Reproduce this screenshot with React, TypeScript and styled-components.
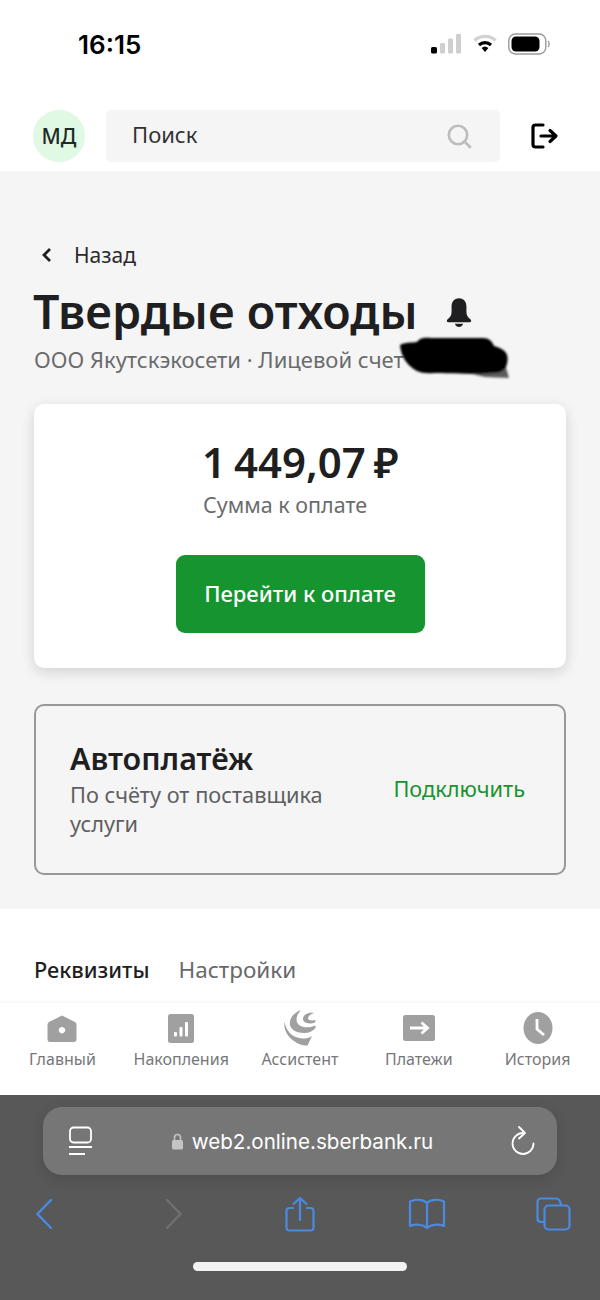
import React from "react";
import styled, { createGlobalStyle } from "styled-components";

const GlobalStyle = createGlobalStyle`
  html, body {
    margin: 0;
    padding: 0;
    background: #fff;
    font-family: "Noto Sans", "Liberation Sans", sans-serif;
  }
`;

const HomeIcon = () => (
  <svg width="30" height="27" viewBox="0 0 30 27">
    <path
      fill="#a0a0a0"
      fillRule="evenodd"
      d="M15 0.5 L28 7 Q29.5 8 29.5 9.5 V24 Q29.5 27 27 27 H3 Q0.5 27 0.5 24 V9.5 Q0.5 8 2 7 Z M15 12 a3.2 3.2 0 1 0 0.01 0 Z"
    />
  </svg>
);

const SavingsIcon = () => (
  <svg width="26" height="29" viewBox="0 0 26 29">
    <rect x="0" y="0" width="26" height="29" rx="2.5" fill="#a0a0a0" />
    <rect x="6" y="18" width="3" height="4.5" rx="1" fill="#fff" />
    <rect x="11.5" y="13" width="3" height="9.5" rx="1" fill="#fff" />
    <rect x="17" y="8" width="3" height="14.5" rx="1" fill="#fff" />
  </svg>
);

const AssistantIcon = () => (
  <svg width="32" height="36" viewBox="0 0 32 36">
    <path
      fill="#a0a0a0"
      d="M17 0 C9 3 5 9 6 15 C7 20 13 23 20 23 C25 23 29 21 31.5 18 L31.5 15.5 C26 18 19 18 15 15 C11 12 12 5 17 0 Z"
    />
    <path
      fill="#a0a0a0"
      d="M30 3 C24 1.5 18.5 5 19 9.5 C19.5 13 25 14.5 31 12.5 L31.5 10 C28 11 24.5 10.5 24 8.5 C23.6 6.5 26.5 4.5 30 3 Z"
    />
    <path
      fill="#a0a0a0"
      d="M0.5 12 C-1 20 5 31 18 35 C20 35.5 22 35.5 23.5 35.5 L28 26 C22 30 14 29 8 25 C4 22 1.5 17 0.5 12 Z"
    />
  </svg>
);

const PaymentsIcon = () => (
  <svg width="32" height="26" viewBox="0 0 32 26">
    <rect x="0" y="0" width="32" height="26" rx="2.5" fill="#a0a0a0" />
    <path d="M7 13 H24 M18.5 7.5 L24.5 13 L18.5 18.5" fill="none" stroke="#fff" strokeWidth="2.8" />
  </svg>
);

const HistoryIcon = () => (
  <svg width="30" height="32" viewBox="0 0 30 32">
    <ellipse cx="15" cy="16" rx="14.5" ry="16" fill="#a0a0a0" />
    <path d="M14 7 V17 L21 23" fill="none" stroke="#fff" strokeWidth="2.8" />
  </svg>
);

const tabs = [
  { label: "Главный", icon: <HomeIcon /> },
  { label: "Накопления", icon: <SavingsIcon /> },
  { label: "Ассистент", icon: <AssistantIcon /> },
  { label: "Платежи", icon: <PaymentsIcon /> },
  { label: "История", icon: <HistoryIcon /> },
];

const App = () => {
  return (
    <Page>
      <GlobalStyle />
      <StatusBar>
        <Clock>16:15</Clock>
        <StatusIcons>
          <svg width="31" height="20" viewBox="0 0 31 20">
            <rect x="0" y="13" width="6" height="6.5" rx="1.5" fill="#000" />
            <rect x="9" y="9" width="5" height="10.5" rx="1.2" fill="#cfcfcf" />
            <rect x="17" y="4.5" width="5" height="15" rx="1.2" fill="#cfcfcf" />
            <rect x="25" y="0" width="5" height="19.5" rx="1.2" fill="#cfcfcf" />
          </svg>
          <svg width="24" height="20" viewBox="0 0 24 20">
            <path d="M1.5 6.5 C7 1 17 1 22.5 6.5" fill="none" stroke="#d2d2d2" strokeWidth="3.4" />
            <path d="M6 11 C9.5 7.8 14.5 7.8 18 11" fill="none" stroke="#000" strokeWidth="3.2" />
            <path d="M8.6 14 C10.8 12 13.2 12 15.4 14 L12 18 Z" fill="#000" />
          </svg>
          <svg width="42" height="22" viewBox="0 0 42 22">
            <rect x="0.8" y="1" width="37" height="20" rx="6.5" fill="none" stroke="#9a9a9a" strokeWidth="1.4" />
            <rect x="3.5" y="3.5" width="28" height="15" rx="4.5" fill="#000" />
            <path d="M40 8 C41.5 9 41.5 13 40 14" fill="none" stroke="#9a9a9a" strokeWidth="1.4" />
          </svg>
        </StatusIcons>
      </StatusBar>

      <Header>
        <Avatar>МД</Avatar>
        <SearchBox>
          <SearchText>Поиск</SearchText>
          <svg width="26" height="26" viewBox="0 0 26 26">
            <circle cx="12" cy="12" r="9.2" fill="none" stroke="#bdbdbd" strokeWidth="2.6" />
            <path d="M18.5 18.5 L24 24" stroke="#bdbdbd" strokeWidth="2.8" strokeLinecap="round" />
          </svg>
        </SearchBox>
        <LogoutButton>
          <svg width="28" height="26" viewBox="0 0 28 26">
            <path
              d="M12 2 H4.5 Q2 2 2 4.5 V21.5 Q2 24 4.5 24 H12"
              fill="none"
              stroke="#000"
              strokeWidth="3.2"
              strokeLinecap="round"
            />
            <path
              d="M10 13 H24.5 M19 7.5 L25 13 L19 18.5"
              fill="none"
              stroke="#000"
              strokeWidth="3.2"
              strokeLinecap="round"
              strokeLinejoin="round"
            />
          </svg>
        </LogoutButton>
      </Header>

      <Content>
        <BackRow>
          <svg width="12" height="16" viewBox="0 0 12 16">
            <path d="M9 2 L3 8 L9 14" fill="none" stroke="#1f1f22" strokeWidth="2.8" />
          </svg>
          <BackText>Назад</BackText>
        </BackRow>
        <TitleRow>
          <Title>Твердые отходы</Title>
          <BellIcon width="26" height="30" viewBox="0 0 28 32">
            <path
              fill="#1f1f22"
              d="M14 0 C19.5 0 22 4 22 9 V15 C22 19 24 21 26.5 23 C27.8 24.2 27 26 25.5 26 H2.5 C1 26 0.2 24.2 1.5 23 C4 21 6 19 6 15 V9 C6 4 8.5 0 14 0 Z"
            />
            <path fill="#1f1f22" d="M9.5 27.5 H18.5 C17.5 30 16 31 14 31 C12 31 10.5 30 9.5 27.5 Z" />
          </BellIcon>
        </TitleRow>
        <SubtitleRow>
          <Subtitle>ООО Якутскэкосети · Лицевой счет</Subtitle>
          <Redaction viewBox="0 0 114 46">
            <defs>
              <filter id="smear" x="-10%" y="-20%" width="120%" height="140%">
                <feGaussianBlur stdDeviation="1.1" />
              </filter>
            </defs>
            <g filter="url(#smear)">
              <path d="M58 34 L108 28 L112 42 L88 41 Z" fill="#333" opacity="0.8" />
              <path
                d="M3 9 C8 6 14 7 20 6 C22 2 28 1 34 2 L86 2 C92 2 95 5 97 10 C104 12 110 15 110.5 21 C111 28 109 34 102 36 C88 38 62 38 44 37 C32 37 26 38 20 35 C12 31 4 22 3 9 Z"
                fill="#050505"
              />
            </g>
          </Redaction>
        </SubtitleRow>

        <PayCard>
          <AmountBlock>
            <Amount>1 449,07 ₽</Amount>
            <AmountLabel>Сумма к оплате</AmountLabel>
          </AmountBlock>
          <PayButton>Перейти к оплате</PayButton>
        </PayCard>

        <AutoCard>
          <AutoText>
            <AutoTitle>Автоплатёж</AutoTitle>
            <AutoDesc>По счёту от поставщика услуги</AutoDesc>
          </AutoText>
          <ConnectLink>Подключить</ConnectLink>
        </AutoCard>
      </Content>

      <TabsSection>
        <TabLabel $active>Реквизиты</TabLabel>
        <TabLabel>Настройки</TabLabel>
      </TabsSection>

      <TabBar>
        {tabs.map((tab) => (
          <TabItem key={tab.label}>
            <TabIcon>{tab.icon}</TabIcon>
            <TabName>{tab.label}</TabName>
          </TabItem>
        ))}
      </TabBar>

      <Browser>
        <UrlBar>
          <svg width="26" height="30" viewBox="0 0 26 30">
            <rect x="2" y="1.5" width="21" height="15" rx="3.5" fill="none" stroke="#fff" strokeWidth="1.8" />
            <path d="M1 21 H24 M1 28 H17" stroke="#fff" strokeWidth="1.8" />
          </svg>
          <UrlCenter>
            <svg width="13" height="17" viewBox="0 0 13 17">
              <path d="M3.5 7 V4.5 a3 3 0 0 1 6 0 V7" fill="none" stroke="#c4c4c4" strokeWidth="1.6" />
              <rect x="1" y="7" width="11" height="9.5" rx="1.5" fill="#c4c4c4" />
            </svg>
            <UrlText>web2.online.sberbank.ru</UrlText>
          </UrlCenter>
          <svg width="26" height="32" viewBox="0 0 26 32">
            <path
              d="M13 8 A10.5 10.5 0 1 0 23.5 18.5"
              fill="none"
              stroke="#fff"
              strokeWidth="1.8"
              strokeLinecap="round"
            />
            <path
              d="M9 2 L15 8 L9 13.5"
              fill="none"
              stroke="#fff"
              strokeWidth="1.8"
              strokeLinecap="round"
              strokeLinejoin="round"
            />
          </svg>
        </UrlBar>
        <BrowserTools>
          <ToolSlot>
            <svg width="18" height="32" viewBox="0 0 18 32">
              <path d="M16 2 L2.5 16 L16 30" fill="none" stroke="#4a8ae0" strokeWidth="2.4" strokeLinecap="round" />
            </svg>
          </ToolSlot>
          <ToolSlot>
            <svg width="18" height="32" viewBox="0 0 18 32">
              <path d="M2 2 L15.5 16 L2 30" fill="none" stroke="#6f6f6f" strokeWidth="2.4" strokeLinecap="round" />
            </svg>
          </ToolSlot>
          <ToolSlot>
            <svg width="30" height="36" viewBox="0 0 30 36">
              <path
                d="M9 12 H4.5 Q1.5 12 1.5 15 V31.5 Q1.5 34.5 4.5 34.5 H25.5 Q28.5 34.5 28.5 31.5 V15 Q28.5 12 25.5 12 H21"
                fill="none"
                stroke="#4a8ae0"
                strokeWidth="2.2"
              />
              <path
                d="M15 24 V2 M8.5 8 L15 2 L21.5 8"
                fill="none"
                stroke="#4a8ae0"
                strokeWidth="2.2"
                strokeLinecap="round"
              />
            </svg>
          </ToolSlot>
          <ToolSlot>
            <svg width="38" height="32" viewBox="0 0 38 32">
              <path
                d="M19 5 C15 1 7 1 2 3.5 V28 C7 26 15 26 19 30 C23 26 31 26 36 28 V3.5 C31 1 23 1 19 5 Z M19 5 V30"
                fill="none"
                stroke="#4a8ae0"
                strokeWidth="2.2"
                strokeLinejoin="round"
              />
            </svg>
          </ToolSlot>
          <ToolSlot>
            <svg width="35" height="34" viewBox="0 0 35 34">
              <path
                d="M8 25 H5 Q1.5 25 1.5 21.5 V5 Q1.5 1.5 5 1.5 H20 Q24 1.5 25 8"
                fill="none"
                stroke="#4a8ae0"
                strokeWidth="2.2"
              />
              <rect x="8.5" y="8.5" width="25" height="24" rx="4" fill="none" stroke="#4a8ae0" strokeWidth="2.2" />
            </svg>
          </ToolSlot>
        </BrowserTools>
        <HomeBar />
      </Browser>
    </Page>
  );
};

export default App;

const Page = styled.div`
  width: 600px;
  height: 1300px;
  display: flex;
  flex-direction: column;
  overflow: hidden;
  background: #fff;
`;
const StatusBar = styled.div`
  height: 100px;
  box-sizing: border-box;
  padding: 0 50px 0 78px;
  display: flex;
  justify-content: space-between;
  align-items: flex-start;
`;
const Clock = styled.div`
  margin-top: 27px;
  font-family: Inter, sans-serif;
  font-size: 26px;
  line-height: 36px;
  font-weight: 600;
  color: #000;
`;
const StatusIcons = styled.div`
  margin-top: 33px;
  display: flex;
  align-items: center;
  gap: 11px;
`;
const Header = styled.div`
  height: 71px;
  box-sizing: border-box;
  padding: 10px 41px 9px 33px;
  display: flex;
  align-items: center;
`;
const Avatar = styled.div`
  width: 52px;
  height: 52px;
  flex: none;
  border-radius: 50%;
  background: #dff9e4;
  display: flex;
  align-items: center;
  justify-content: center;
  font-size: 21px;
  font-weight: 500;
  color: #1f2a24;
`;
const SearchBox = styled.div`
  margin-left: 21px;
  width: 394px;
  height: 52px;
  box-sizing: border-box;
  padding: 0 28px 0 26px;
  border-radius: 5px;
  background: #f5f5f5;
  display: flex;
  align-items: center;
  justify-content: space-between;
`;
const SearchText = styled.div`
  font-size: 22px;
  line-height: 30px;
  margin-top: -4px;
  color: #333;
`;
const LogoutButton = styled.div`
  margin-left: auto;
  display: flex;
`;
const Content = styled.div`
  height: 738px;
  box-sizing: border-box;
  padding: 67px 34px 0;
  background: #f5f5f5;
`;
const BackRow = styled.div`
  height: 34px;
  display: flex;
  align-items: center;
  gap: 21px;
  padding-left: 7px;
`;
const BackText = styled.div`
  font-size: 21px;
  color: #2a2a2d;
`;
const TitleRow = styled.div`
  margin-top: 8px;
  height: 62px;
  display: flex;
  align-items: center;
  gap: 28px;
`;
const Title = styled.h1`
  margin: 0 0 0 -1px;
  font-size: 46.6px;
  line-height: 62px;
  font-weight: 600;
  color: #1f1f22;
  white-space: nowrap;
`;
const BellIcon = styled.svg`
  margin-top: 3px;
`;
const SubtitleRow = styled.div`
  position: relative;
  margin-top: 1px;
  height: 32px;
  display: flex;
  align-items: center;
`;
const Subtitle = styled.div`
  font-size: 22px;
  color: #6b6b6e;
  white-space: nowrap;
`;
const Redaction = styled.svg`
  position: absolute;
  left: 363px;
  top: -7px;
  width: 114px;
  height: 46px;
  overflow: visible;
`;
const PayCard = styled.div`
  margin-top: 29px;
  height: 264px;
  box-sizing: border-box;
  padding-top: 34px;
  background: #fff;
  border-radius: 10px;
  box-shadow: 0 4px 14px rgba(0, 0, 0, 0.14);
  display: flex;
  flex-direction: column;
  align-items: center;
`;
const AmountBlock = styled.div`
  width: 194px;
`;
const Amount = styled.div`
  margin-left: -1px;
  font-size: 42px;
  line-height: 48px;
  font-weight: 600;
  word-spacing: -3px;
  white-space: nowrap;
  color: #1f1f22;
`;
const AmountLabel = styled.div`
  margin-top: 3px;
  font-size: 21.5px;
  line-height: 32px;
  white-space: nowrap;
  color: #6b6b6e;
`;
const PayButton = styled.div`
  margin-top: 34px;
  width: 249px;
  height: 78px;
  box-sizing: border-box;
  padding-bottom: 3px;
  border-radius: 9px;
  background: #16942f;
  color: #fff;
  font-size: 22px;
  font-weight: 500;
  display: flex;
  align-items: center;
  justify-content: center;
`;
const AutoCard = styled.div`
  margin-top: 36px;
  height: 171px;
  box-sizing: border-box;
  padding: 0 39px 0 34px;
  border: 2px solid #98989b;
  border-radius: 10px;
  display: flex;
  align-items: center;
  justify-content: space-between;
`;
const AutoText = styled.div`
  width: 290px;
  margin-bottom: 3px;
`;
const AutoTitle = styled.div`
  margin-bottom: 3px;
  font-size: 30.5px;
  line-height: 38px;
  font-weight: 600;
  color: #1f1f22;
`;
const AutoDesc = styled.div`
  font-size: 21.75px;
  line-height: 29px;
  color: #5f5f62;
`;
const ConnectLink = styled.div`
  font-size: 21.75px;
  color: #16942f;
  margin-bottom: 2px;
`;
const TabsSection = styled.div`
  height: 94px;
  box-sizing: border-box;
  padding: 45px 34px 0;
  display: flex;
  gap: 29px;
`;
const TabLabel = styled.div<{ $active?: boolean }>`
  font-size: ${(p) => (p.$active ? "21.7px" : "22.5px")};
  line-height: 32px;
  font-weight: ${(p) => (p.$active ? 500 : 400)};
  color: ${(p) => (p.$active ? "#1f1f22" : "#68686b")};
`;
const TabBar = styled.div`
  height: 92px;
  box-sizing: border-box;
  padding: 7px 3px 0;
  display: grid;
  grid-template-columns: repeat(5, 1fr);
  background: #fff;
  box-shadow: 0 -1px 3px rgba(0, 0, 0, 0.05);
`;
const TabItem = styled.div`
  display: flex;
  flex-direction: column;
  align-items: center;
`;
const TabIcon = styled.div`
  height: 36px;
  display: flex;
  align-items: center;
  justify-content: center;
`;
const TabName = styled.div`
  margin-top: 1px;
  font-size: 16px;
  line-height: 24px;
  color: #77777a;
  white-space: nowrap;
`;
const Browser = styled.div`
  flex: 1;
  box-sizing: border-box;
  padding-top: 12px;
  background: #585858;
  display: flex;
  flex-direction: column;
`;
const UrlBar = styled.div`
  margin: 0 43px;
  height: 68px;
  box-sizing: border-box;
  padding: 0 21px 0 25px;
  border-radius: 19px;
  background: #767676;
  box-shadow: 0 4px 14px rgba(0, 0, 0, 0.12);
  display: flex;
  align-items: center;
  justify-content: space-between;
`;
const UrlCenter = styled.div`
  display: flex;
  align-items: center;
  gap: 8px;
`;
const UrlText = styled.div`
  font-family: Inter, sans-serif;
  font-size: 20.6px;
  color: #fff;
`;
const BrowserTools = styled.div`
  margin-top: 17px;
  padding-left: 24px;
  height: 44px;
  display: grid;
  grid-template-columns: 130px 126px 127px 126px 40px;
  align-items: center;
`;
const ToolSlot = styled.div`
  width: 40px;
  display: flex;
  justify-content: center;
`;
const HomeBar = styled.div`
  margin: 26px auto 0;
  width: 214px;
  height: 9px;
  border-radius: 5px;
  background: #f2f2f2;
`;
